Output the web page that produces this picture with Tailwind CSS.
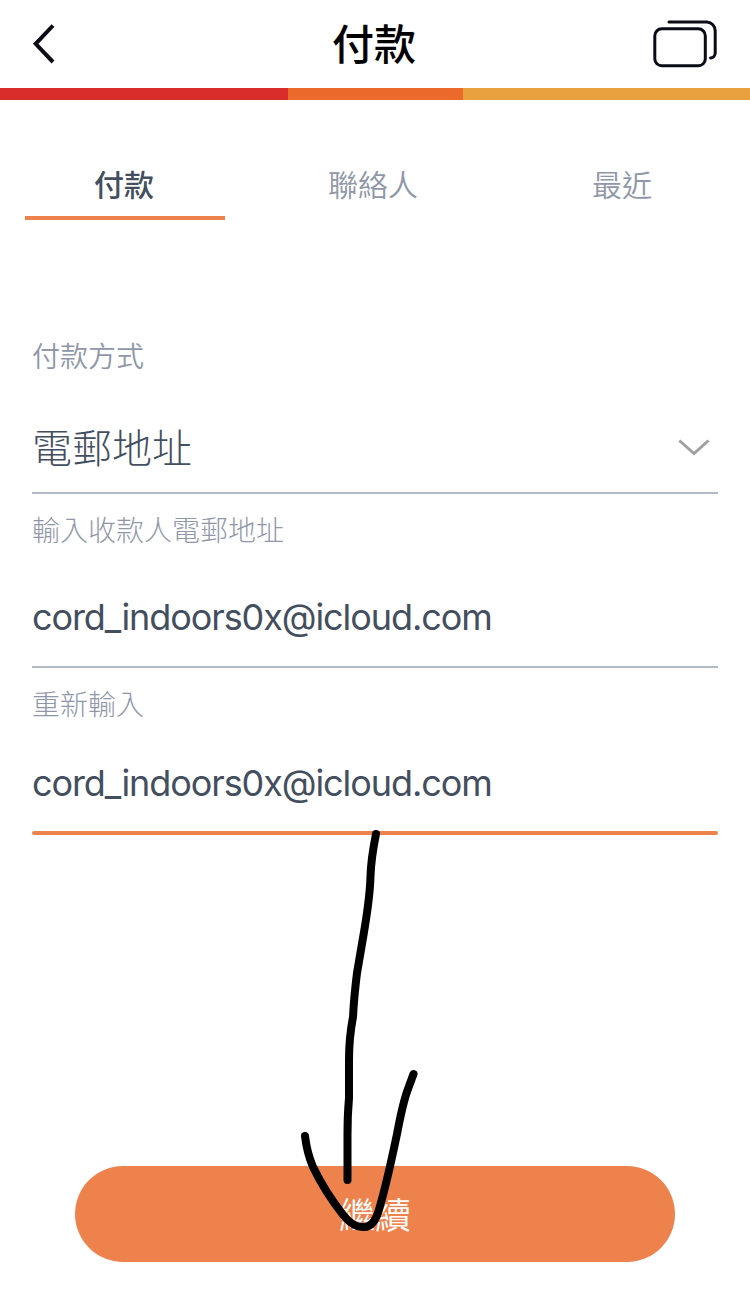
<!DOCTYPE html>
<html lang="zh-Hant">
<head>
<meta charset="utf-8">
<meta name="viewport" content="width=device-width">
<title>付款</title>
<script src="https://cdn.jsdelivr.net/npm/@tailwindcss/browser@4"></script>
</head>
<body class="bg-white">
<div class="relative flex h-[1294px] w-[750px] flex-col overflow-hidden bg-white font-['Noto_Sans_CJK_TC',sans-serif] text-[#434e5e]">
  <header class="grid h-[88px] shrink-0 grid-cols-[1fr_auto_1fr] items-center px-8 text-[#0b0b16]">
    <svg class="size-12" viewBox="0 0 48 48" fill="none" stroke="currentColor" stroke-width="4"><path d="M21 5.500L3.700 23.800L21 42"/></svg>
    <h1 class="pr-0.5 pb-1 text-[42px] leading-[84px] font-medium text-black">付款</h1>
    <svg class="h-[52px] w-[68px] justify-self-end" viewBox="0 0 68 52" fill="none" stroke="currentColor" stroke-width="3" stroke-linecap="round"><rect x="4.800" y="10.800" width="50.500" height="37" rx="7"/><path d="M19 4H57A8.700 8.700 0 0 1 65.200 12.700V35A5 5 0 0 1 60.500 40"/></svg>
  </header>
  <div class="flex h-3 shrink-0">
    <div class="w-[288px] bg-[#d92d2b]"></div>
    <div class="w-[175px] bg-[#eb6a2b]"></div>
    <div class="flex-1 bg-[#e9a140]"></div>
  </div>
  <nav class="mt-[50px] grid h-[70px] shrink-0 grid-cols-3 text-center text-[30px] leading-[66px] text-[#8f97a9]">
    <div class="mx-[25px] border-b-4 border-[#ee824d] pr-0.5 font-medium text-[#434e5e]">付款</div>
    <div class="pr-1 font-[350]">聯絡人</div>
    <div class="pr-1.5 font-[350]">最近</div>
  </nav>
  <main class="mt-[116px] flex flex-col px-8">
    <section class="flex h-[158px] flex-col border-b-2 border-[#b2b8c4]">
      <label class="text-[28px] leading-[39px] font-[350] text-[#8f97a9]">付款方式</label>
      <div class="mt-[41px] flex items-center justify-between pr-2">
        <span class="text-[40px] leading-[60px] font-light">電郵地址</span>
        <svg class="mt-1 h-5 w-8" viewBox="0 0 32 20" fill="none" stroke="#a0a0a0" stroke-width="3"><path d="M1.300 2.500L16 15.500L30.500 2.500"/></svg>
      </div>
    </section>
    <section class="flex h-[174px] flex-col border-b-2 border-[#b2bac0] pt-4">
      <label class="text-[28px] leading-[39px] font-light text-[#8f97a9]">輸入收款人電郵地址</label>
      <div class="mt-[44px] font-[Inter,sans-serif] text-[36px] leading-[48px] tracking-[-1.080px]">cord_indoors0x@icloud.com</div>
    </section>
    <section class="flex h-[163px] flex-col pt-4">
      <label class="text-[28px] leading-[39px] font-light text-[#8f97a9]">重新輸入</label>
      <div class="mt-[36px] font-[Inter,sans-serif] text-[36px] leading-[48px] tracking-[-1.080px]">cord_indoors0x@icloud.com</div>
    </section>
    <div class="h-1 rounded-full bg-[#ee824d]"></div>
  </main>
  <button class="mx-[75px] mt-auto mb-8 h-24 rounded-full bg-[#ee824d] pb-0.5 text-[36px] leading-[94px] font-[350] text-white">繼續</button>
  <svg class="absolute top-0 left-0 h-[1294px] w-[750px]" viewBox="0 0 750 1294" fill="none" stroke="#000" stroke-width="8" stroke-linecap="round" stroke-linejoin="round">
    <path d="M376 834Q371 859 370.500 876Q370 897 363.500 935L357 973Q354 997 353 1017Q349 1038 349 1060V1098Q347.500 1115 347.500 1135V1180"/>
    <path d="M305 1136Q307 1153 313 1167Q325 1192 344 1216Q354 1228 364 1227Q375 1227 380 1206Q387 1182 397 1134Q403 1102 408 1089L413.500 1074"/>
  </svg>
</div>
</body>
</html>
